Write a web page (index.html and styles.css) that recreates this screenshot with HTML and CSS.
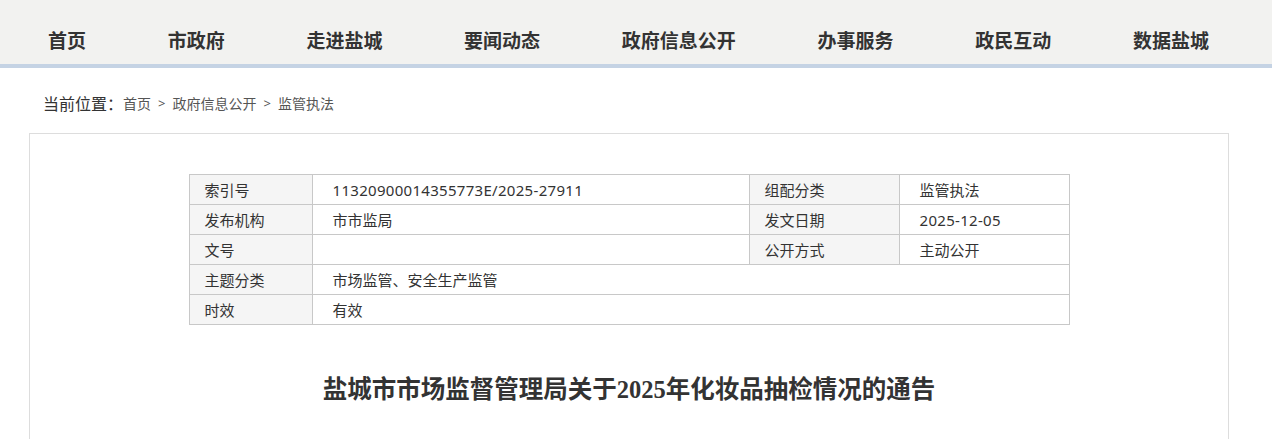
FILE: index.html
```html
<!DOCTYPE html>
<html lang="zh-CN">
<head>
<meta charset="utf-8">
<title>盐城市市场监督管理局关于2025年化妆品抽检情况的通告</title>
<link rel="stylesheet" href="styles.css">
</head>
<body>
<header class="nav">
  <ul class="nav-list">
    <li>首页</li>
    <li>市政府</li>
    <li>走进盐城</li>
    <li>要闻动态</li>
    <li>政府信息公开</li>
    <li>办事服务</li>
    <li>政民互动</li>
    <li>数据盐城</li>
  </ul>
</header>
<div class="crumb">
  <span class="crumb-label">当前位置：</span><span class="crumb-link">首页</span><span class="sep">&gt;</span><span class="crumb-link">政府信息公开</span><span class="sep">&gt;</span><span class="crumb-link">监管执法</span>
</div>
<main class="content">
  <table class="meta">
    <colgroup>
      <col class="c1"><col class="c2"><col class="c3"><col class="c4">
    </colgroup>
    <tr><th>索引号</th><td><span class="num">11320900014355773E/2025-27911</span></td><th>组配分类</th><td>监管执法</td></tr>
    <tr><th>发布机构</th><td>市市监局</td><th>发文日期</th><td><span class="num">2025-12-05</span></td></tr>
    <tr><th>文号</th><td></td><th>公开方式</th><td>主动公开</td></tr>
    <tr><th>主题分类</th><td colspan="3">市场监管、安全生产监管</td></tr>
    <tr><th>时效</th><td colspan="3">有效</td></tr>
  </table>
  <h1 class="title">盐城市市场监督管理局关于2025年化妆品抽检情况的通告</h1>
</main>
</body>
</html>
```

FILE: styles.css
```css
html, body {
  margin: 0;
  padding: 0;
  background: #fff;
}
body {
  font-family: "Noto Sans", "Noto Sans CJK SC", sans-serif;
  color: #333;
  overflow: hidden;
}
.nav {
  background: #f2f2f0;
  border-bottom: 4px solid #c5d3e4;
  height: 64px;
}
.nav-list {
  list-style: none;
  margin: 0;
  padding: 18px 0 0 48px;
  display: flex;
  gap: 81.7px;
  align-items: center;
  height: 64px;
  box-sizing: border-box;
}
.nav-list li {
  font-size: 19px;
  font-weight: bold;
  color: #333;
  line-height: 1;
}
.crumb {
  padding: 0 0 0 43px;
  margin-top: 23px;
  height: 24px;
  display: flex;
  align-items: center;
  color: #555;
  font-size: 14px;
}
.crumb-label {
  font-size: 16px;
  color: #333;
}
.crumb-link {
  color: #555;
}
.sep {
  margin: 0 7px;
  color: #555;
  font-size: 13px;
}
.content {
  margin: 18px 0 0 29px;
  width: 1200px;
  box-sizing: border-box;
  border: 1px solid #ddd;
  border-bottom: none;
  padding-top: 40px;
  height: 320px;
}
.meta {
  width: 880px;
  margin: 0 auto;
  border-collapse: collapse;
  table-layout: fixed;
  font-size: 15px;
  color: #333;
}
.meta .c1 { width: 123px; }
.meta .c2 { width: 437px; }
.meta .c3 { width: 150px; }
.meta .c4 { width: 170px; }
.meta th, .meta td {
  border: 1px solid #c8c8c8;
  height: 29px;
  padding: 0;
  text-align: left;
  font-weight: normal;
  vertical-align: middle;
  line-height: 20px;
}
.meta th {
  background: #f5f5f5;
  padding-left: 15px;
}
.meta td {
  padding-left: 20px;
}
.meta .num {
  letter-spacing: 0.3px;
}
.title {
  margin: 48px 0 0;
  text-align: center;
  font-family: "Liberation Serif", "Noto Sans CJK SC", serif;
  font-size: 24.5px;
  font-weight: bold;
  color: #333;
  line-height: 34px;
}
```
